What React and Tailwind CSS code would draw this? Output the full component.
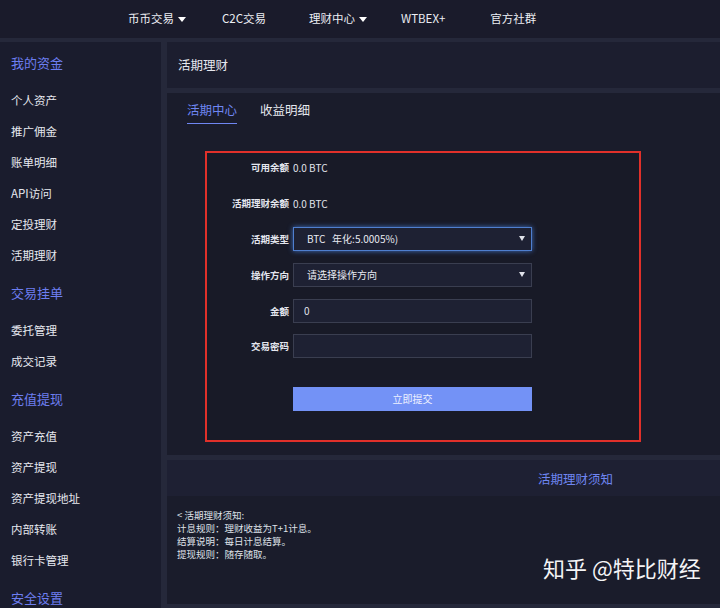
const navItems = [
  { label: '币币交易', caret: true, ml: 'ml-[128px]' },
  { label: 'C2C交易', ml: 'ml-[36px]' },
  { label: '理财中心', caret: true, ml: 'ml-[43px]' },
  { label: 'WTBEX+', ml: 'ml-[34px]' },
  { label: '官方社群', ml: 'ml-[45px]' },
];

const sideGroups = [
  { title: '我的资金', items: ['个人资产', '推广佣金', '账单明细', 'API访问', '定投理财', '活期理财'] },
  { title: '交易挂单', items: ['委托管理', '成交记录'] },
  { title: '充值提现', items: ['资产充值', '资产提现', '资产提现地址', '内部转账', '银行卡管理'] },
  { title: '安全设置', items: [] },
];

const font = { fontFamily: '"Noto Sans CJK SC", "Noto Sans", sans-serif' };

function Caret() {
  return <span className="inline-block ml-1 w-0 h-0 border-l-[4px] border-r-[4px] border-t-[5px] border-l-transparent border-r-transparent border-t-white align-middle" />;
}

function Row({ label, children }) {
  return (
    <div className="flex items-center">
      <div className="w-[86px] pr-[4px] text-right text-[9.5px] font-bold text-[#e4e6ee]">{label}</div>
      {children}
    </div>
  );
}

function Select({ value, focus }) {
  return (
    <div className={`w-[239px] h-[24px] flex items-center justify-between pl-[13px] pr-[6px] text-[10px] text-[#e8eaf2] bg-[#1e2133] border ${focus ? 'border-[#4f7fcf] shadow-[0_0_5px_#3f6fc0]' : 'border-[#3a3e50]'}`}>
      <span className="whitespace-pre">{value}</span>
      <span className="w-0 h-0 border-l-[3px] border-r-[3px] border-t-[5px] border-l-transparent border-r-transparent border-t-[#e0e2ea]" />
    </div>
  );
}

export default function App() {
  return (
    <div className="w-[720px] h-[608px] overflow-hidden bg-[#25283a] flex flex-col" style={font}>
      {/* top nav */}
      <div className="h-[38px] shrink-0 bg-[#1a1b2b] flex items-center text-[11.5px] text-[#eceef4]">
        {navItems.map(n => (
          <div key={n.label} className={`flex items-center ${n.ml}`}>
            {n.label}
            {n.caret && <Caret />}
          </div>
        ))}
      </div>

      <div className="flex flex-1 mt-[4px] gap-[6px] min-h-0">
        {/* sidebar */}
        <div className="w-[161px] shrink-0 bg-[#1a1c2d] pl-[11px] pt-[6px]">
          {sideGroups.map(g => (
            <div key={g.title} className="mb-[7px]">
              <div className="h-[30px] flex items-center text-[13px] text-[#6d7ef0]">{g.title}</div>
              <div className="pt-[7px]">
                {g.items.map(i => (
                  <div key={i} className="h-[31px] flex items-center text-[11.5px] text-[#e6e8ef]">{i}</div>
                ))}
              </div>
            </div>
          ))}
        </div>

        {/* main */}
        <div className="flex-1 flex flex-col min-w-0">
          <div className="h-[46px] shrink-0 bg-[#1c1e2f] flex items-center pl-[11px] text-[12.5px] text-[#e6e8ef]">活期理财</div>

          <div className="h-[362px] shrink-0 mt-[5px] bg-[#1a1c2b] flex flex-col">
            <div className="flex gap-[23px] pl-[20px] pt-[8px] text-[12.5px]">
              <div className="text-[#6f86f2] border-b-[1.5px] border-[#6f86f2] pb-[3px]">活期中心</div>
              <div className="text-[#e6e8ef] pb-[3px]">收益明细</div>
            </div>

            <div className="ml-[38px] mt-[27px] w-[436px] h-[291px] border-2 border-[#e0302a] bg-[#181a27] flex flex-col pt-[3px]">
              <div className="h-[23px] flex items-center"><Row label="可用余额"><span className="text-[10px] text-[#e0e2ea]">0.0 BTC</span></Row></div>
              <div className="h-[23px] mt-[13px] flex items-center"><Row label="活期理财余额"><span className="text-[10px] text-[#e0e2ea]">0.0 BTC</span></Row></div>
              <div className="mt-[12px]"><Row label="活期类型"><Select focus value={'BTC   年化:5.0005%)'} /></Row></div>
              <div className="mt-[12px]"><Row label="操作方向"><Select value="请选择操作方向" /></Row></div>
              <div className="mt-[12px]">
                <Row label="金额">
                  <div className="w-[239px] h-[24px] flex items-center pl-[10px] text-[10px] text-[#e0e2ea] bg-[#1e2133] border border-[#3a3e50]">0</div>
                </Row>
              </div>
              <div className="mt-[11px]">
                <Row label="交易密码">
                  <div className="w-[239px] h-[24px] bg-[#1e2133] border border-[#3a3e50]" />
                </Row>
              </div>
              <div className="mt-[29px] ml-[86px] w-[239px] h-[24px] bg-[#7392f6] flex items-center justify-center text-[10px] text-[#eef1ff]">立即提交</div>
            </div>
          </div>

          <div className="h-[36px] shrink-0 mt-[5px] bg-[#1e2033] flex items-center pl-[371px] pt-[3px] text-[12.5px] text-[#6f86f2]">活期理财须知</div>

          <div className="flex-1 bg-[#1a1c2b] relative pl-[10px] pt-[13px] text-[9.5px] leading-[13px] text-[#dfe1e8] mb-[4px]">
            <div>&lt; 活期理财须知:</div>
            <div>计息规则：理财收益为T+1计息。</div>
            <div>结算说明：每日计息结算。</div>
            <div>提现规则：随存随取。</div>
            <div className="absolute left-[376px] top-[65px] text-[22px] text-[#f4f4f6] whitespace-nowrap">知乎 @特比财经</div>
          </div>
        </div>
      </div>
    </div>
  );
}
